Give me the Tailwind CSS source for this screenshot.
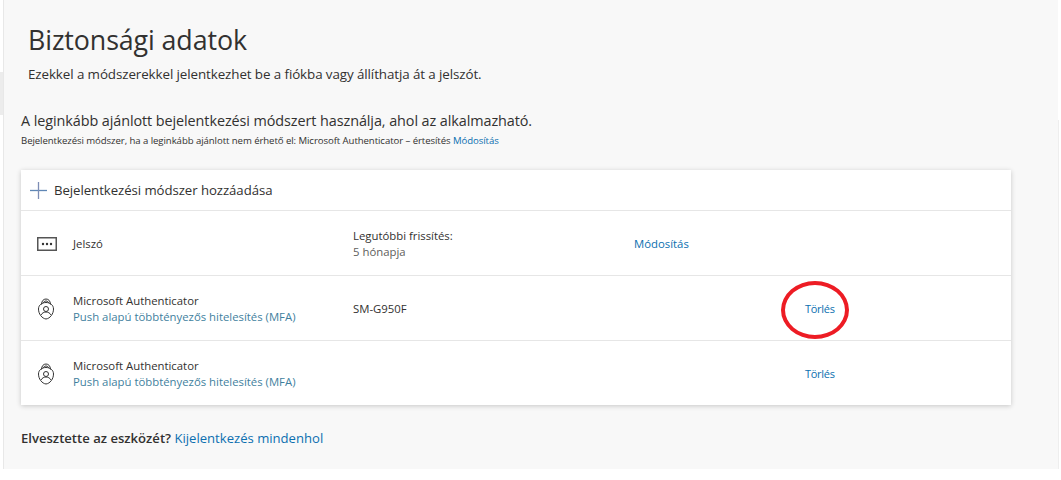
<!DOCTYPE html>
<html lang="hu"><head><meta charset="utf-8">
<script src="https://cdn.jsdelivr.net/npm/@tailwindcss/browser@4"></script>
</head>
<body class="bg-white font-['Open_Sans','Noto_Sans',sans-serif] text-[#323130] h-[480px] w-[1061px] overflow-hidden">
<main class="ml-[3px] mr-[3px] h-[469px] bg-[#f8f8f8] border-l border-[#e8e8e8] pl-[17px] pr-[47px]">
  <header class="pl-[7px] pt-[21px]">
    <h1 class="text-[26.8px] leading-[38px] tracking-[-0.1px]">Biztonsági adatok</h1>
    <p class="mt-[7px] text-[13.4px] leading-[17px] tracking-[-0.1px]">Ezekkel a módszerekkel jelentkezhet be a fiókba vagy állíthatja át a jelszót.</p>
  </header>
  <p class="mt-[28px] text-[14.4px] leading-[20px] tracking-[-0.08px]">A leginkább ajánlott bejelentkezési módszert használja, ahol az alkalmazható.</p>
  <p class="mt-[3px] text-[9.6px] leading-[14px] tracking-[-0.07px]">Bejelentkezési módszer, ha a leginkább ajánlott nem érhető el: Microsoft Authenticator – értesítés <a class="text-[#0b6fb0]">Módosítás</a></p>
  <section class="mt-[22px] bg-white shadow-[0_1px_5px_rgba(0,0,0,0.2)]">
    <div class="h-[41px] flex items-center pl-[9px] gap-[7px] border-b border-[#e6e6e6]">
      <svg class="w-[17px] h-[17px]" viewBox="0 0 17 17"><path d="M0 8.5h17" stroke="#5f87b5" stroke-width="1.3" fill="none"/><path d="M8.500 0v17" stroke="#7d8db5" stroke-width="1.3" fill="none"/></svg>
      <span class="pt-[2px] text-[13.2px] tracking-[-0.05px]">Bejelentkezési módszer hozzáadása</span>
    </div>
    <div class="h-[65px] pt-[2px] grid grid-cols-[52px_280px_281px_1fr] items-center border-b border-[#e6e6e6] text-[11.35px] leading-[16px]">
      <svg class="ml-[16px] w-[20px] h-[14px]" viewBox="0 0 20 14"><rect x="0.75" y="0.75" width="18.5" height="12.5" fill="none" stroke="#555" stroke-width="1.5"/><circle cx="6" cy="7" r="1.2" fill="#333"/><circle cx="10" cy="7" r="1.2" fill="#333"/><circle cx="14" cy="7" r="1.2" fill="#333"/></svg>
      <span>Jelszó</span>
      <div><p>Legutóbbi frissítés:</p><p class="text-[#605e5c]">5 hónapja</p></div>
      <a class="text-[#0b6fb0]">Módosítás</a>
    </div>
    <div class="h-[65px] pt-[2px] grid grid-cols-[52px_280px_452px_1fr] items-center border-b border-[#e6e6e6] text-[11.35px] leading-[16px]">
      <svg class="ml-[16px] w-[18px] h-[22px]" viewBox="0 0 18 22" fill="none" stroke="#333" stroke-width="1"><path d="M9 4.500C5 4.500 1.500 7 1.500 11c0 5 3.500 9.500 7.500 10 4-.5 7.500-5 7.500-10 0-4-3.500-6.500-7.500-6.500z"/><path d="M4.500 6.500C4.500 3 6.500 1 9 1s4.500 2 4.500 5.500"/><path d="M6.500 5C6.500 3.800 7.700 3 9 3s2.500.8 2.500 2"/><circle cx="9" cy="11" r="2.500"/><path d="M4 17c1-2 3-3 5-3s4 1 5 3"/></svg>
      <div><p>Microsoft Authenticator</p><p class="text-[#3f7f9e]">Push alapú többtényezős hitelesítés (MFA)</p></div>
      <span>SM-G950F</span>
      <a class="text-[11px] tracking-[-0.3px] text-[#0b6fb0]">Törlés</a>
    </div>
    <div class="h-[64px] pt-[2px] grid grid-cols-[52px_732px_1fr] items-center text-[11.35px] leading-[16px]">
      <svg class="ml-[16px] w-[18px] h-[22px]" viewBox="0 0 18 22" fill="none" stroke="#333" stroke-width="1"><path d="M9 4.500C5 4.500 1.500 7 1.500 11c0 5 3.500 9.500 7.500 10 4-.5 7.500-5 7.500-10 0-4-3.500-6.500-7.500-6.500z"/><path d="M4.500 6.500C4.500 3 6.500 1 9 1s4.500 2 4.500 5.500"/><path d="M6.500 5C6.500 3.800 7.700 3 9 3s2.500.8 2.500 2"/><circle cx="9" cy="11" r="2.500"/><path d="M4 17c1-2 3-3 5-3s4 1 5 3"/></svg>
      <div><p>Microsoft Authenticator</p><p class="text-[#3f7f9e]">Push alapú többtényezős hitelesítés (MFA)</p></div>
      <a class="text-[11px] tracking-[-0.3px] text-[#0b6fb0]">Törlés</a>
    </div>
  </section>
  <p class="mt-[24px] text-[13.1px] leading-[18px]"><span class="font-semibold">Elvesztette az eszközét?</span> <a class="text-[#0b6fb0]">Kijelentkezés mindenhol</a></p>
</main>
<div class="absolute left-0 top-[72px] w-[3px] h-[43px] bg-[#ececec]"></div>
<div class="absolute left-[1058px] top-[120px] w-px h-[349px] bg-[#eeeeee]"></div>
<div class="absolute left-[781px] top-[281px] w-[68px] h-[58px] rounded-[50%] border-[4px] border-[#ed1c24]"></div>
</body></html>
